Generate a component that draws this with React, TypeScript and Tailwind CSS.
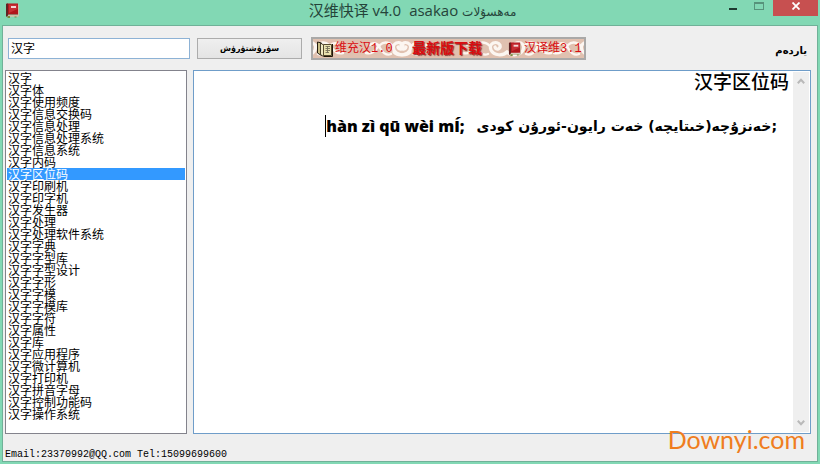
import { useState } from 'react';

const entries = [
  '汉字', '汉字体', '汉字使用频度', '汉字信息交换码', '汉字信息处理', '汉字信息处理系统',
  '汉字信息系统', '汉字内码', '汉字区位码', '汉字印刷机', '汉字印字机', '汉字发生器',
  '汉字处理', '汉字处理软件系统', '汉字字典', '汉字字型库', '汉字字型设计', '汉字字形',
  '汉字字模', '汉字字模库', '汉字字符', '汉字属性', '汉字库', '汉字应用程序',
  '汉字微计算机', '汉字打印机', '汉字拼音字母', '汉字控制功能码', '汉字操作系统',
];

function RedBook({ className }: { className: string }) {
  return (
    <svg viewBox="0 0 14 15" className={className} aria-hidden="true">
      <path d="M2 12V14H12.500L13.500 12.500V2L12.500 1.500V12Z" fill="#c9c2ac" />
      <path d="M1 .5H12.500V11.500H3L1 13.500Z" fill="#b0161c" />
      <path d="M.5 1L2.500 .5V12L1.500 14L.5 13Z" fill="#5f2424" />
      <path d="M3.500 1.500H12V6L3.500 10Z" fill="#d23a3f" opacity=".7" />
      <path d="M5.500 3H10.500V5H5.500Z" fill="#f3d8d6" />
      <path d="M2 13H4.500V15H2ZM9 13.500H11V14.500H9Z" fill="#7a8a3c" />
    </svg>
  );
}

function OpenBook() {
  return (
    <svg viewBox="0 0 16 16" className="h-4 w-4" aria-hidden="true">
      <path d="M.5 1L4.500 2V14.500L.5 12Z" fill="#c9bd85" stroke="#251d10" />
      <path d="M3.500 2L6.500 4V15.500L3.500 13.500Z" fill="#f1ebc6" stroke="#251d10" strokeWidth=".8" />
      <path d="M6.500 3.500H14.500V14.500H6.500Z" fill="#e9e2b0" stroke="#564a30" />
      <path d="M15.500 3V15.500H7" fill="none" stroke="#1f1809" />
      <path d="M8.500 5.500H13M8.500 7.500H13M8.500 9.500H13M8.500 11.500H12M10.500 5V12" stroke="#77705a" strokeWidth=".9" fill="none" />
    </svg>
  );
}

function Scrolls() {
  return (
    <svg viewBox="0 0 271 19" preserveAspectRatio="none" className="absolute inset-0 h-full w-full" aria-hidden="true">
      <defs>
        <g id="curl" fill="none" stroke="#fcf6f1" strokeLinecap="round">
          <path strokeWidth="3.200" d="M1 13C5 17 14 17 17 11C20 4 11 1 8 6C7 10 12 12 13 8" />
          <path strokeWidth="2.400" d="M17 9C20 3 27 2 31 6C35 10 38 16 45 14" />
          <path strokeWidth="2.400" d="M20 15C25 17 29 13 31 9C33 4 38 3 41 6" />
        </g>
      </defs>
      <rect width="271" height="19" fill="#e0c1b0" />
      <use href="#curl" x="-15" />
      <use href="#curl" transform="translate(98 0) scale(-1 1)" />
      <use href="#curl" x="80" />
      <use href="#curl" transform="translate(195 0) scale(-1 1)" />
      <use href="#curl" x="193" />
      <use href="#curl" transform="translate(286 0) scale(-1 1)" />
    </svg>
  );
}

function Chevron({ up }: { up?: boolean }) {
  return (
    <svg viewBox="0 0 8 6" className="h-1.5 w-2" aria-hidden="true">
      <path d={up ? 'M.8 5.200L4 1.800L7.200 5.200' : 'M.8 .8L4 4.200L7.200 .8'} fill="none" stroke="#b9b9b9" strokeWidth="2" />
    </svg>
  );
}

export default function App() {
  const [selected, setSelected] = useState(8);
  const [query, setQuery] = useState('汉字');

  return (
    <div className="flex min-h-screen flex-col bg-[#82d8b4] px-0.5 pb-0.5 font-['Liberation_Sans','Noto_Sans_CJK_SC',sans-serif] text-black">
      <header className="flex h-[25px] items-start">
        <div className="w-26 pt-[3px] pl-[3px]"><RedBook className="h-[15px] w-[15px]" /></div>
        <h1 className="flex flex-1 justify-center gap-2 text-[15px] leading-5 whitespace-pre text-[#25443a]">
          <span className="font-['Open_Sans','Noto_Sans_CJK_SC',sans-serif]">汉维快译 v4.0</span>
          <span className="font-['Open_Sans','DejaVu_Sans',sans-serif]">asakao <bdi lang="ug" className="text-xs">مەھسۇلات</bdi></span>
        </h1>
        <div className="flex">
          <button aria-label="Minimize" className="flex h-4 w-7 items-end justify-center pb-1.5"><span className="h-0.5 w-2 bg-[#1d3a30]" /></button>
          <button aria-label="Maximize" className="flex h-4 w-6 items-end justify-center pb-1.5"><span className="h-2 w-2.5 border border-t-2 border-[#57937b]" /></button>
          <button aria-label="Close" className="ml-0.5 flex h-4 w-[45px] items-center justify-center bg-[#c75050]">
            <svg viewBox="0 0 8 8" className="mb-1 h-2 w-2" aria-hidden="true"><path d="M.5 .5L7.500 7.500M7.500 .5L.5 7.500" stroke="white" strokeWidth="1.800" /></svg>
          </button>
        </div>
      </header>

      <main className="flex flex-1 flex-col border border-[#70b198] bg-[#efefef]">
        <div className="flex h-11 items-center pr-2.5 pl-[5px]">
          <input
            aria-label="汉字"
            value={query}
            onChange={(e) => setQuery(e.target.value)}
            className="h-[21px] w-[182px] border border-[#8db2d5] bg-white px-0.5 pb-0.5 text-xs outline-none"
          />
          <button lang="ug" dir="rtl" className="ml-[7px] h-[21px] w-[105px] border border-[#acacac] bg-gradient-to-b from-[#efefef] to-[#e4e4e4] pt-0.5 font-['DejaVu_Sans',sans-serif] text-[8px] leading-4 font-bold">
            سۈرۈشتۈرۈش
          </button>
          <div className="relative ml-[9px] flex h-[23px] w-[275px] items-center border-2 border-[#aaa9a8] pt-0.5 font-['Liberation_Mono','Noto_Sans_CJK_SC',monospace] text-xs whitespace-nowrap text-[#d90d10]">
            <Scrolls />
            <a href="#weichonghan" className="relative ml-1 flex w-[95px] items-center gap-0.5"><OpenBook />维充汉1.0</a>
            <a href="#download" className="relative w-24 text-sm font-bold [text-shadow:1px_1px_1px_#85302b]">最新版下载</a>
            <a href="#hanyiwei" className="relative flex items-center gap-0.5"><RedBook className="h-3.5 w-3.5" />汉译维3.1</a>
          </div>
          <button lang="ug" dir="rtl" className="ml-auto pt-1.5 font-['DejaVu_Sans',sans-serif] text-[10px] leading-4 font-bold">ياردەم</button>
        </div>

        <div className="flex flex-1 gap-1.5 pr-1.5 pl-0.5">
          <ul aria-label="词条" className="w-[182px] border border-[#83838c] bg-white p-px pb-3">
            {entries.map((entry, i) => (
              <li key={entry}>
                <button
                  aria-pressed={i === selected}
                  onClick={() => setSelected(i)}
                  className={`flex h-3 w-full items-start pt-px pl-px text-left text-xs leading-3 ${i === selected ? 'bg-[#3399ff] text-white' : ''}`}
                >
                  {entry}
                </button>
              </li>
            ))}
          </ul>
          <section className="flex flex-1 border border-[#6f9dc9] bg-white p-px">
            <article className="flex-1 pr-1">
              <h2 className="pt-px text-right text-[19px] leading-5 font-medium">汉字区位码</h2>
              <p className="mt-[21px] flex items-center justify-end pr-3 font-['DejaVu_Sans',sans-serif] text-sm leading-6 font-bold whitespace-pre">
                <span className="h-[22px] w-px bg-black" />
                <span className="mr-3 font-['Open_Sans','DejaVu_Sans',sans-serif] text-base leading-6 font-extrabold">hàn zì qū wèi mÍ;</span>
                <span lang="ug" dir="rtl">خەنزۇچە(خىتايچە) خەت رايون-ئورۇن كودى</span>
                <span>;</span>
              </p>
            </article>
            <div className="flex w-4 flex-col items-center justify-between bg-[#efefef]">
              <button aria-label="Scroll up" className="flex h-[18px] w-4 items-center justify-center"><Chevron up /></button>
              <button aria-label="Scroll down" className="flex h-[18px] w-4 items-center justify-center"><Chevron /></button>
            </div>
          </section>
        </div>

        <footer className="relative flex h-[27px] items-end pl-0.5">
          <p className="font-['Liberation_Mono',monospace] text-[10px] leading-3">Email:23370992@QQ.com Tel:15099699600</p>
          <span className="absolute right-3 bottom-2.5 font-['Lato',sans-serif] text-[25px] leading-6 text-[#ef7d20]">Downyi.com</span>
        </footer>
      </main>
    </div>
  );
}
